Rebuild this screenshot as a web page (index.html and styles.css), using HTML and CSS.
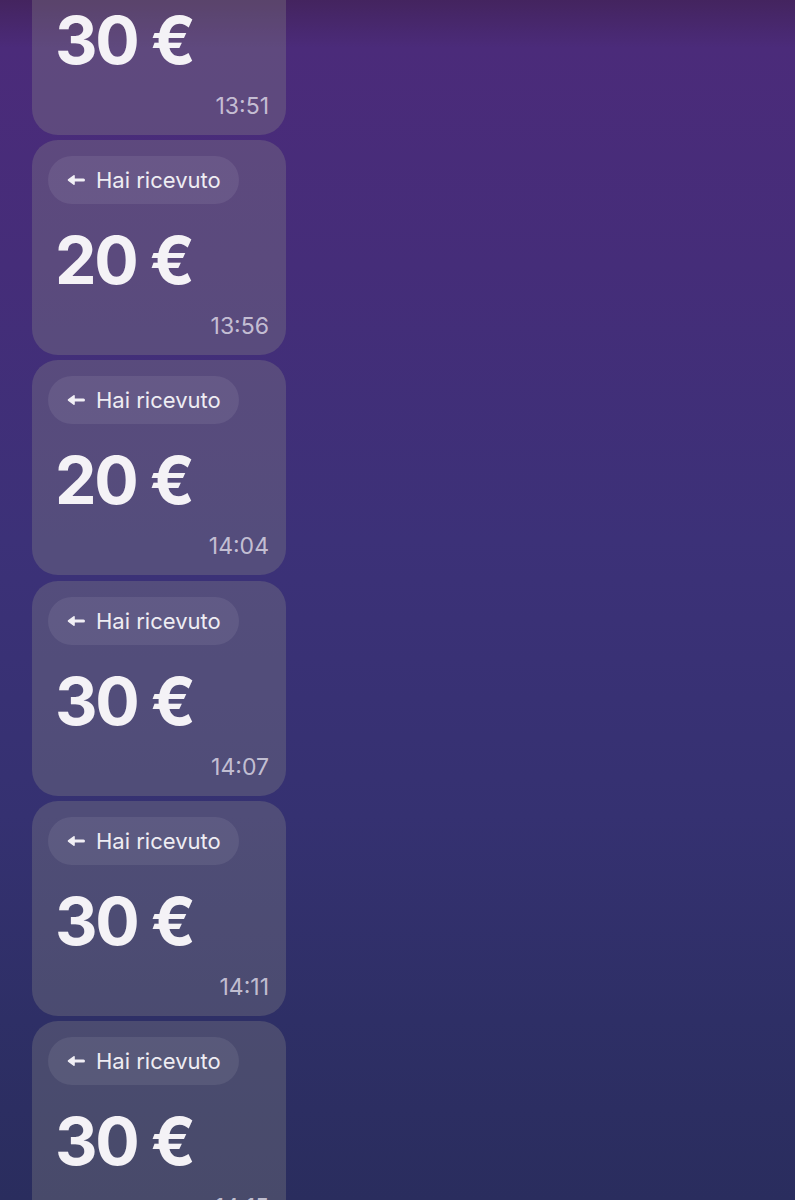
FILE: index.html
```html
<!DOCTYPE html>
<html lang="it">
<head>
 <meta charset="UTF-8">
 <meta name="viewport" content="width=device-width,initial-scale=1.0">
 <title>Movimenti</title>
 <link rel="stylesheet" href="styles.css">
</head>
<body>
<div class="screen">
 <div class="feed">
  <div class="card">
   <div class="pill"><svg class="arrow" viewBox="0 0 18 12"><path class="head" d="M1.5 6L7 1.8v8.4z"/><path d="M6 6h10.5"/></svg><span>Hai ricevuto</span></div>
   <div class="amount">30 €</div>
   <div class="time">13:51</div>
  </div>
  <div class="card">
   <div class="pill"><svg class="arrow" viewBox="0 0 18 12"><path class="head" d="M1.5 6L7 1.8v8.4z"/><path d="M6 6h10.5"/></svg><span>Hai ricevuto</span></div>
   <div class="amount">20 €</div>
   <div class="time">13:56</div>
  </div>
  <div class="card">
   <div class="pill"><svg class="arrow" viewBox="0 0 18 12"><path class="head" d="M1.5 6L7 1.8v8.4z"/><path d="M6 6h10.5"/></svg><span>Hai ricevuto</span></div>
   <div class="amount">20 €</div>
   <div class="time">14:04</div>
  </div>
  <div class="card">
   <div class="pill"><svg class="arrow" viewBox="0 0 18 12"><path class="head" d="M1.5 6L7 1.8v8.4z"/><path d="M6 6h10.5"/></svg><span>Hai ricevuto</span></div>
   <div class="amount">30 €</div>
   <div class="time">14:07</div>
  </div>
  <div class="card">
   <div class="pill"><svg class="arrow" viewBox="0 0 18 12"><path class="head" d="M1.5 6L7 1.8v8.4z"/><path d="M6 6h10.5"/></svg><span>Hai ricevuto</span></div>
   <div class="amount">30 €</div>
   <div class="time">14:11</div>
  </div>
  <div class="card">
   <div class="pill"><svg class="arrow" viewBox="0 0 18 12"><path class="head" d="M1.5 6L7 1.8v8.4z"/><path d="M6 6h10.5"/></svg><span>Hai ricevuto</span></div>
   <div class="amount">30 €</div>
   <div class="time">14:15</div>
  </div>
 </div>
</div>
</body>
</html>
```

FILE: styles.css
```css
html, body{
  margin: 0;
  padding: 0;
}
body{
  font-family: Inter, "Liberation Sans", sans-serif;
  color: #f4f2f6;
}
.screen{
  height: 1200px;
  overflow: hidden;
  background: linear-gradient(180deg, #44245f 0%, #4b2b7a 4%, #452d79 22%, #3c3178 45%, #353171 68%, #2e2f66 85%, #2a2d5e 100%);
}
.feed{
  display: flex;
  flex-direction: column;
  gap: 5.2px;
  width: 254px;
  margin-left: 32px;
  margin-top: -80px;
}
.card{
  display: flex;
  flex-direction: column;
  height: 215px;
  box-sizing: border-box;
  padding: 16px 17px 17px 16px;
  border-radius: 26px;
  background: rgba(142, 142, 135, 0.3);
}
.pill{
  display: inline-flex;
  align-self: flex-start;
  align-items: center;
  gap: 11px;
  height: 48px;
  box-sizing: border-box;
  padding: 0 18px 0 19px;
  border-radius: 24px;
  background: rgba(255, 255, 255, 0.08);
  font-size: 22px;
  color: #efedf3;
}
.arrow{
  width: 18px;
  height: 12px;
  fill: none;
  stroke: #f1eff5;
  stroke-width: 3;
  stroke-linecap: round;
  stroke-linejoin: round;
}
.arrow .head{
  fill: #f1eff5;
  stroke-width: 1.6;
}
.amount{
  margin-top: 23px;
  padding-left: 7px;
  font-size: 66px;
  line-height: 1;
  font-weight: 700;
  letter-spacing: -0.035em;
}
.time{
  margin-top: auto;
  text-align: right;
  font-size: 23px;
  line-height: 1;
  color: rgba(225, 222, 235, 0.8);
}
```
